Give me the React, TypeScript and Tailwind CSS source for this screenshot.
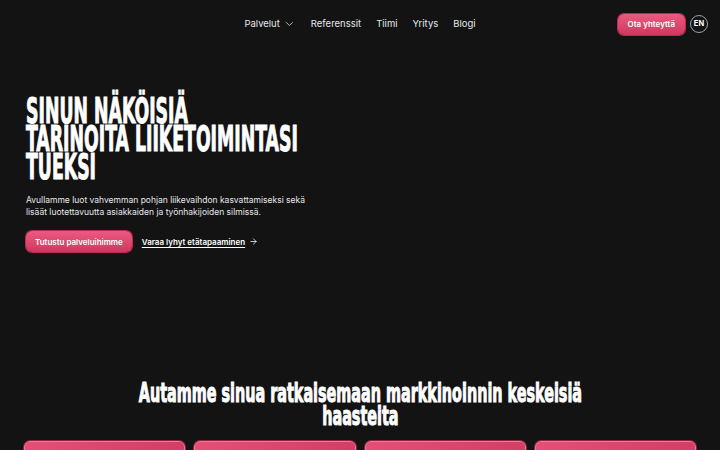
import { ChevronDown, ArrowRight } from "lucide-react";

const navLinks = ["Referenssit", "Tiimi", "Yritys", "Blogi"];

const body = { fontFamily: "Inter, 'Noto Sans', sans-serif" };
const display = { fontFamily: "'Liberation Sans Narrow', 'DejaVu Sans Condensed', sans-serif" };

const pinkBtn =
  "rounded-md bg-gradient-to-b from-[#ea5a80] to-[#d1365f] shadow-[0_0_0_1px_#b82a52] text-white font-semibold";

const NavBar = () => (
  <header className="h-12 flex items-center relative pr-3">
    <nav className="absolute left-1/2 -translate-x-1/2 flex items-center gap-[15px] text-[9.5px] text-gray-200">
      <span className="flex items-center gap-1">
        Palvelut <ChevronDown className="w-3 h-3" strokeWidth={1.5} />
      </span>
      {navLinks.map((l) => (
        <span key={l}>{l}</span>
      ))}
    </nav>
    <div className="ml-auto flex items-center gap-[5px]">
      <button className={`h-[21px] px-[10px] text-[8px] ${pinkBtn}`}>Ota yhteyttä</button>
      <span className="w-[18px] h-[18px] rounded-full border border-gray-400 text-white text-[7.5px] font-bold flex items-center justify-center">
        EN
      </span>
    </div>
  </header>
);

const Card = () => (
  <div className="h-10 rounded-md border border-[#f07b98] shadow-[0_0_0_1px_#8e2240] bg-gradient-to-r from-[#e64e77] to-[#d33d66]" />
);

export default function App() {
  return (
    <div className="w-[720px] h-[450px] overflow-hidden bg-[#131313] text-white" style={body}>
      <NavBar />

      <section className="pl-[26px] pt-[49px]">
        <h1
          className="font-bold uppercase text-[35px] leading-[28px] whitespace-nowrap [-webkit-text-stroke:1px_white]"
          style={display}
        >
          <span className="block origin-left scale-x-[0.55]">Sinun näköisiä</span>
          <span className="block origin-left scale-x-[0.55]">Tarinoita liiketoimintasi</span>
          <span className="block origin-left scale-x-[0.55]">tueksi</span>
        </h1>
        <p className="mt-[13px] text-[8.5px] leading-[12px] text-gray-200 w-[285px]">
          Avullamme luot vahvemman pohjan liikevaihdon kasvattamiseksi sekä lisäät luotettavuutta asiakkaiden ja työnhakijoiden silmissä.
        </p>
        <div className="mt-[13px] flex items-center gap-[10px]">
          <button className={`h-[21px] px-[9px] text-[8px] ${pinkBtn}`}>Tutustu palveluihimme</button>
          <span className="flex items-center gap-1 text-[8px] font-semibold">
            <span className="underline underline-offset-2">Varaa lyhyt etätapaaminen</span>
            <ArrowRight className="w-[9px] h-[9px]" />
          </span>
        </div>
      </section>

      <section className="mt-[130px] flex flex-col items-center">
        <h2
          className="font-bold text-[26px] leading-[23px] text-center whitespace-nowrap [-webkit-text-stroke:1px_white]"
          style={display}
        >
          <span className="block scale-x-[0.615]">Autamme sinua ratkaisemaan markkinoinnin keskeisiä</span>
          <span className="block scale-x-[0.615]">haasteita</span>
        </h2>
        <div className="mt-[13px] w-full px-6 grid grid-cols-4 gap-[9px]">
          <Card />
          <Card />
          <Card />
          <Card />
        </div>
      </section>
    </div>
  );
}
